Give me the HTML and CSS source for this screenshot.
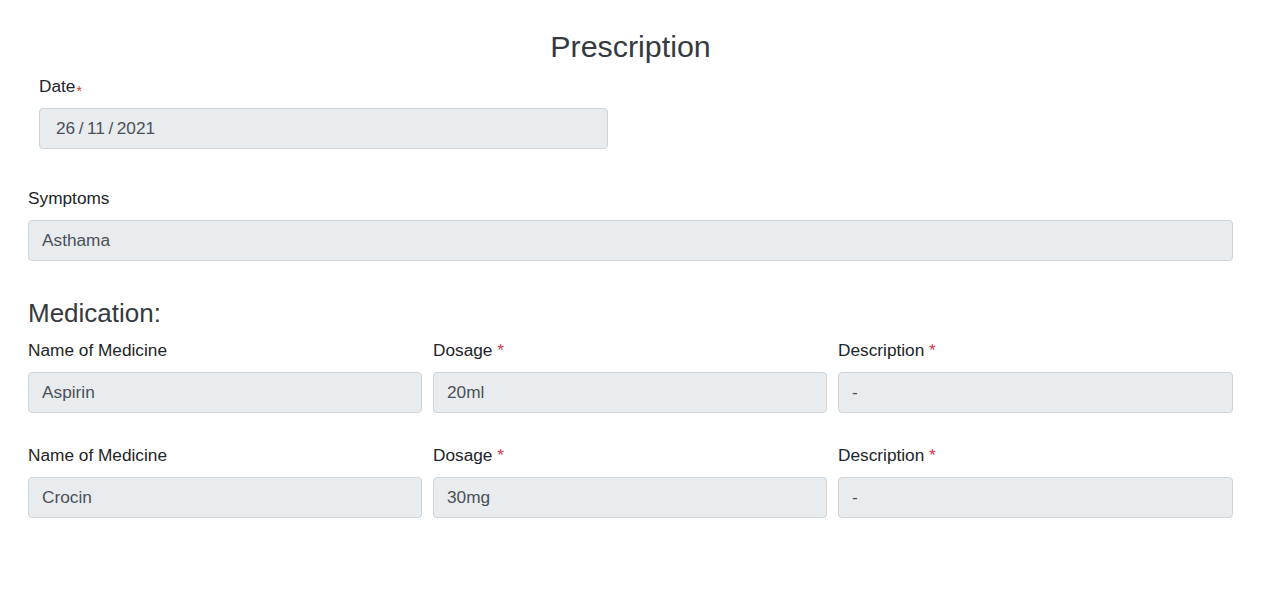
FILE: index.html
```html
<!DOCTYPE html>
<html lang="en">
<head>
<meta charset="utf-8">
<title>Prescription</title>
<link rel="stylesheet" href="styles.css">
</head>
<body>
<main class="page">
  <h1 class="title">Prescription</h1>

  <div class="group group-date">
    <label class="label">Date<span class="req-small">*</span></label>
    <div class="control control-date"><span>26</span><span class="sep">/</span><span>11</span><span class="sep">/</span><span>2021</span></div>
  </div>

  <div class="group group-symptoms">
    <label class="label">Symptoms</label>
    <input class="control" type="text" value="Asthama" readonly>
  </div>

  <h3 class="section">Medication:</h3>

  <div class="med-row">
    <div class="field">
      <label class="label">Name of Medicine</label>
      <input class="control" type="text" value="Aspirin" readonly>
    </div>
    <div class="field">
      <label class="label">Dosage <span class="req">*</span></label>
      <input class="control" type="text" value="20ml" readonly>
    </div>
    <div class="field">
      <label class="label">Description <span class="req">*</span></label>
      <input class="control" type="text" value="-" readonly>
    </div>
  </div>

  <div class="med-row med-row-next">
    <div class="field">
      <label class="label">Name of Medicine</label>
      <input class="control" type="text" value="Crocin" readonly>
    </div>
    <div class="field">
      <label class="label">Dosage <span class="req">*</span></label>
      <input class="control" type="text" value="30mg" readonly>
    </div>
    <div class="field">
      <label class="label">Description <span class="req">*</span></label>
      <input class="control" type="text" value="-" readonly>
    </div>
  </div>
</main>
</body>
</html>
```

FILE: styles.css
```css
* { box-sizing: border-box; }

html, body {
  margin: 0;
  padding: 0;
  background: #ffffff;
}

body {
  font-family: "Liberation Sans", Arial, Helvetica, sans-serif;
  font-size: 17.25px;
  color: #212529;
}

.page {
  width: 1205px;
  margin-left: 28px;
}

.title {
  margin: 28px 0 0;
  font-size: 30.4px;
  line-height: 36px;
  font-weight: 400;
  text-align: center;
  color: #343a40;
}

.label {
  display: block;
  font-size: 17.25px;
  line-height: 25px;
  height: 25px;
  margin-bottom: 9px;
  color: #212529;
}

.req { color: #dc3545; }

.req-small {
  color: #dc3545;
  font-size: 14px;
  line-height: 1;
  margin-left: 1px;
  vertical-align: -4px;
}

.control {
  display: block;
  width: 100%;
  height: 41px;
  padding: 0 13px;
  font-family: "Liberation Sans", Arial, Helvetica, sans-serif;
  font-size: 17.25px;
  color: #495057;
  background: #e9ecef;
  border: 1px solid #ced4da;
  border-radius: 4px;
  outline: none;
}

.group-date {
  margin-top: 10px;
  padding-left: 11px;
}

.control-date {
  width: 569px;
  display: flex;
  align-items: center;
  padding-left: 16px;
}

.control-date .sep { margin: 0 3.5px; }

.group-symptoms { margin-top: 37px; }

.section {
  margin: 37px 0 0;
  font-size: 26px;
  line-height: 30px;
  font-weight: 400;
  color: #343a40;
}

.med-row {
  display: grid;
  grid-template-columns: 394px 394px 1fr;
  column-gap: 11px;
  margin-top: 10px;
}

.med-row-next { margin-top: 30px; }
```
